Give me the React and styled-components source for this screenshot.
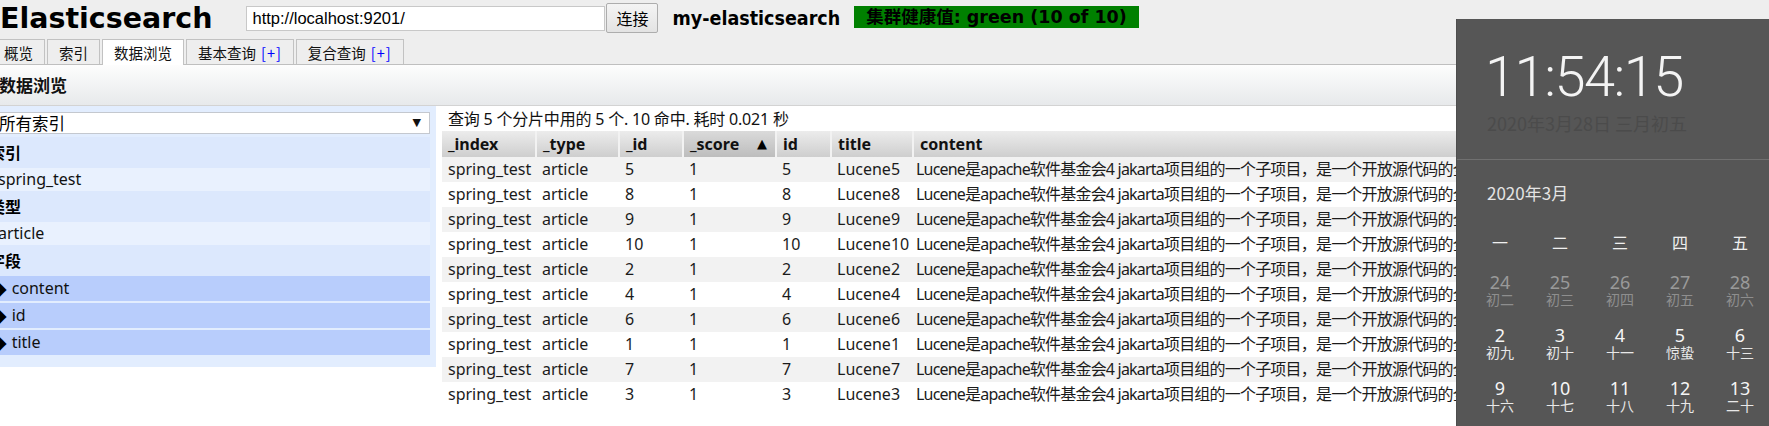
import React from 'react';
import styled, { createGlobalStyle } from 'styled-components';

const SANS = '"Noto Sans", "Noto Sans CJK SC", sans-serif';
const CJK = '"Noto Sans CJK SC", "Noto Sans", sans-serif';
const VERDANA = '"DejaVu Sans", "Noto Sans CJK SC", sans-serif';

const GlobalStyle = createGlobalStyle`
  html, body {
    margin: 0;
    padding: 0;
    overflow: hidden;
    background: #fff;
  }
  body {
    font-family: ${SANS};
    color: #1b1b1b;
  }
`;

const Page = styled.div`
  position: relative;
  width: 1769px;
  height: 426px;
  overflow: hidden;
  background: #fff;
`;

const TopBar = styled.div`
  background: #eeeeee;
`;

const Header = styled.div`
  display: flex;
  align-items: center;
  height: 36px;
  padding-bottom: 3px;
  white-space: nowrap;
`;

const Logo = styled.h1`
  margin: 0 34px 0 0;
  font: bold 28.5px/33px ${VERDANA};
  color: #000;
`;

const UrlInput = styled.input`
  box-sizing: border-box;
  width: 359px;
  height: 25px;
  padding: 0 5px;
  border: 1px solid #c8c8c8;
  background: #fff;
  font: 16.5px "Liberation Sans", Arial, sans-serif;
  color: #000;
  outline: none;
`;

const ConnectButton = styled.button`
  box-sizing: border-box;
  width: 52px;
  height: 30px;
  margin-left: 1px;
  padding: 0;
  border: 1px solid #adadad;
  border-radius: 2px;
  background: linear-gradient(#f4f4f4, #e3e3e3);
  font: 16px ${CJK};
  color: #000;
`;

const ClusterName = styled.span`
  margin-left: 14px;
  font: bold 19.5px "DejaVu Sans Condensed", "DejaVu Sans", sans-serif;
  color: #000;
`;

const Health = styled.span`
  margin-left: 14px;
  margin-top: -2px;
  height: 22px;
  padding: 0 12px;
  background: #008000;
  font: bold 17.5px/22px ${VERDANA};
  color: #000;
`;

const Tabs = styled.div`
  display: flex;
  align-items: flex-end;
  height: 25px;
  margin-left: -8px;
  border-bottom: 1px solid #bfbfbf;
`;

const Tab = styled.div`
  box-sizing: border-box;
  height: ${p => (p.$active ? 26 : 25)}px;
  margin-right: 2px;
  margin-bottom: ${p => (p.$active ? -1 : 0)}px;
  padding: 2px 11px 0;
  border: 1px solid #c2c2c2;
  border-bottom: none;
  background: ${p => (p.$active ? '#fff' : '#eeeeee')};
  font: 14.5px/22px ${CJK};
  color: #111;
  white-space: nowrap;
`;

const Plus = styled.span`
  color: #0000ff;
  margin-left: 5px;
  letter-spacing: 1px;
`;

const Heading = styled.div`
  height: 40px;
  border-bottom: 1px solid #d3d3d3;
  background: linear-gradient(#fdfdfd, #e7e9eb);
  font: bold 17px/40px ${CJK};
  color: #111;
  margin-left: -1px;
`;

const Body = styled.div`
  display: flex;
  align-items: flex-start;
`;

const Sidebar = styled.div`
  box-sizing: border-box;
  flex: none;
  width: 448px;
  margin-left: -12px;
  padding: 6px 6px 12px 0;
  background: #e2edfe;
`;

const IndexSelect = styled.div`
  box-sizing: border-box;
  display: flex;
  align-items: center;
  justify-content: space-between;
  height: 22px;
  margin: 0 0 3px 6px;
  padding: 0 8px 0 4px;
  border: 1px solid #c4c8cf;
  background: #fff;
  font: 16.5px/20px ${CJK};
  color: #000;
`;

const Arrow = styled.span`
  font: 11px/20px "DejaVu Sans", sans-serif;
  color: #111;
`;

const SectionHead = styled.div`
  height: 31px;
  padding-left: 1px;
  background: #dce8fd;
  font: bold 16px/31px ${CJK};
  color: #000;
`;

const SectionItem = styled.div`
  height: 23px;
  padding-left: 10px;
  background: #e9f1fe;
  font: 16px/23px ${SANS};
  color: #111;
`;

const Field = styled.div`
  display: flex;
  align-items: center;
  gap: 5px;
  height: 25px;
  margin-top: ${p => p.$gap}px;
  padding-left: 4px;
  background: #b8cdfc;
  font: 16px/25px ${SANS};
  color: #111;
`;

const Diamond = styled.span`
  font: 19px/25px "DejaVu Sans", sans-serif;
  color: #000;
`;

const Results = styled.div`
  flex: 1;
  min-width: 0;
  padding-left: 6px;
`;

const Summary = styled.div`
  margin-top: 2px;
  padding-left: 6px;
  font: 16px/22px ${SANS};
  letter-spacing: -0.2px;
  color: #111;
  white-space: nowrap;
`;

const Table = styled.table`
  margin-top: 1px;
  border-collapse: collapse;
  table-layout: fixed;
  width: 1500px;
`;

const Th = styled.th`
  box-sizing: border-box;
  height: 26px;
  padding: 0 6px;
  text-align: left;
  font: bold 16px/26px ${SANS};
  color: #111;
  white-space: nowrap;
  border-left: ${p => (p.$first ? 'none' : '2px solid #f2f2f2')};
  background: ${p =>
    p.$sorted
      ? 'linear-gradient(#dadada, #bdbdbd)'
      : 'linear-gradient(#ececec, #cecece)'};
`;

const SortMark = styled.span`
  float: right;
  margin-right: 2px;
  font: 13px/26px "DejaVu Sans", sans-serif;
  color: #000;
`;

const Tr = styled.tr`
  background: ${p => (p.$odd ? '#f2f2f2' : '#fff')};
`;

const Td = styled.td`
  height: 25px;
  padding: 0 ${p => (p.$long ? 3 : 6)}px;
  font: 16px/25px ${SANS};
  letter-spacing: ${p => (p.$long ? '-0.8px' : 'normal')};
  color: #1b1b1b;
  white-space: nowrap;
  overflow: hidden;
`;

/* windows clock flyout lying over the page */
const Flyout = styled.div`
  position: absolute;
  left: 1456px;
  top: 19px;
  width: 340px;
  height: 420px;
  background: #565656;
  border-left: 1px solid #4d4d4d;
  box-sizing: border-box;
  font-family: ${CJK};
`;

const TimeBlock = styled.div`
  padding: 29px 0 24px 28px;
  border-bottom: 1px solid #707070;
`;

const Clock = styled.div`
  font: 300 56px/58px Roboto, "Open Sans", sans-serif;
  letter-spacing: -1.5px;
  color: #f4f4f4;
`;

const LongDate = styled.div`
  margin: 5px 0 0 2px;
  font: 18px/24px ${CJK};
  color: #4b4b4b;
`;

const Month = styled.div`
  margin-top: 21px;
  padding-left: 30px;
  font: 17px/24px ${CJK};
  color: #e4e4e4;
`;

const Grid = styled.div`
  display: grid;
  grid-template-columns: repeat(7, 60px);
  padding-left: 13px;
  text-align: center;
`;

const WeekGrid = styled(Grid)`
  margin-top: 25px;
  font: 16px/24px ${CJK};
  color: #f0f0f0;
`;

const DayGrid = styled(Grid)`
  margin-top: 9px;
  grid-auto-rows: 53px;
`;

const Day = styled.div`
  padding-top: 8.5px;
  color: ${p => (p.$dim ? '#9a9a9a' : '#f5f5f5')};
`;

const DayNum = styled.div`
  font: 18px/20px ${SANS};
`;

const Lunar = styled.div`
  font: 14px/14px ${CJK};
  white-space: nowrap;
  color: ${p => (p.$dim ? '#8e8e8e' : '#e8e8e8')};
`;

const CONTENT =
  'Lucene是apache软件基金会4 jakarta项目组的一个子项目，是一个开放源代码的全文检索引擎工具包，但它不是一个完整的全文检索引擎，而是一个全文检索引擎的架构';

const docs = [5, 8, 9, 10, 2, 4, 6, 1, 7, 3];

const columns = [
  ['_index', 94],
  ['_type', 83],
  ['_id', 64],
  ['_score', 93],
  ['id', 55],
  ['title', 82],
  ['content', 1029],
];

const days = [
  [24, '初二', true], [25, '初三', true], [26, '初四', true], [27, '初五', true],
  [28, '初六', true], [29, '初七', true], [1, '初八'],
  [2, '初九'], [3, '初十'], [4, '十一'], [5, '惊蛰'], [6, '十三'], [7, '十四'], [8, '十五'],
  [9, '十六'], [10, '十七'], [11, '十八'], [12, '十九'], [13, '二十'], [14, '廿一'], [15, '廿二'],
];

export default function App() {
  return (
    <Page>
      <GlobalStyle />
      <TopBar>
        <Header>
          <Logo>Elasticsearch</Logo>
          <UrlInput defaultValue="http://localhost:9201/" />
          <ConnectButton>连接</ConnectButton>
          <ClusterName>my-elasticsearch</ClusterName>
          <Health>集群健康值: green (10 of 10)</Health>
        </Header>
        <Tabs>
          <Tab>概览</Tab>
          <Tab>索引</Tab>
          <Tab $active>数据浏览</Tab>
          <Tab>基本查询<Plus>[+]</Plus></Tab>
          <Tab>复合查询<Plus>[+]</Plus></Tab>
        </Tabs>
      </TopBar>
      <Heading>数据浏览</Heading>
      <Body>
        <Sidebar>
          <IndexSelect>
            所有索引
            <Arrow>▼</Arrow>
          </IndexSelect>
          <SectionHead>索引</SectionHead>
          <SectionItem>spring_test</SectionItem>
          <SectionHead>类型</SectionHead>
          <SectionItem>article</SectionItem>
          <SectionHead>字段</SectionHead>
          <Field $gap={0}><Diamond>◆</Diamond>content</Field>
          <Field $gap={2}><Diamond>◆</Diamond>id</Field>
          <Field $gap={2}><Diamond>◆</Diamond>title</Field>
        </Sidebar>
        <Results>
          <Summary>查询 5 个分片中用的 5 个. 10 命中. 耗时 0.021 秒</Summary>
          <Table>
            <colgroup>
              {columns.map(([name, w]) => (
                <col key={name} style={{ width: w }} />
              ))}
            </colgroup>
            <thead>
              <tr>
                {columns.map(([name], i) => (
                  <Th key={name} $first={i === 0} $sorted={name === '_score'}>
                    {name}
                    {name === '_score' && <SortMark>▲</SortMark>}
                  </Th>
                ))}
              </tr>
            </thead>
            <tbody>
              {docs.map((n, i) => (
                <Tr key={n} $odd={i % 2 === 0}>
                  <Td>spring_test</Td>
                  <Td>article</Td>
                  <Td>{n}</Td>
                  <Td>1</Td>
                  <Td>{n}</Td>
                  <Td>Lucene{n}</Td>
                  <Td $long>{CONTENT}</Td>
                </Tr>
              ))}
            </tbody>
          </Table>
        </Results>
      </Body>

      <Flyout>
        <TimeBlock>
          <Clock>11:54:15</Clock>
          <LongDate>2020年3月28日 三月初五</LongDate>
        </TimeBlock>
        <Month>2020年3月</Month>
        <WeekGrid>
          {['一', '二', '三', '四', '五', '六', '日'].map(d => (
            <div key={d}>{d}</div>
          ))}
        </WeekGrid>
        <DayGrid>
          {days.map(([num, lunar, dim]) => (
            <Day key={`${num}-${lunar}`} $dim={dim}>
              <DayNum>{num}</DayNum>
              <Lunar $dim={dim}>{lunar}</Lunar>
            </Day>
          ))}
        </DayGrid>
      </Flyout>
    </Page>
  );
}
